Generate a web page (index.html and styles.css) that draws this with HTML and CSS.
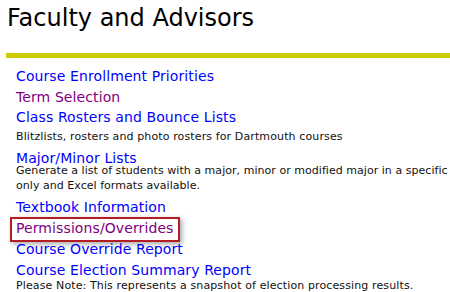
FILE: index.html
```html
<!DOCTYPE html>
<html lang="en">
<head>
    <meta charset="UTF-8">
    <title>Faculty and Advisors</title>
    <link rel="stylesheet" href="styles.css">
</head>
<body>

<div class="page">
    <h1 class="page-title">Faculty and Advisors</h1>
    <div class="rule"></div>

    <!-- Faculty tools -->
    <ul class="menu">
        <li><a href="#" class="link">Course Enrollment Priorities</a></li>
        <li><a href="#" class="link visited">Term Selection</a></li>
        <li class="has-desc">
            <a href="#" class="link">Class Rosters and Bounce Lists</a>
            <div class="desc">Blitzlists, rosters and photo rosters for Dartmouth courses</div>
        </li>
        <li class="has-desc">
            <a href="#" class="link">Major/Minor Lists</a>
            <div class="desc tight">Generate a list of students with a major, minor or modified major in a specific<br>only and Excel formats available.</div>
        </li>
        <li><a href="#" class="link">Textbook Information</a></li>
        <li class="highlight"><a href="#" class="link visited">Permissions/Overrides</a></li>
        <li><a href="#" class="link">Course Override Report</a></li>
        <li>
            <a href="#" class="link">Course Election Summary Report</a>
            <div class="desc note">Please Note: This represents a snapshot of election processing results.</div>
        </li>
    </ul>
</div>

</body>
</html>
```

FILE: styles.css
```css
body {
    margin: 0;
    font-family: "DejaVu Sans", Verdana, sans-serif;
    color: #000;
    background: #fff;
    overflow: hidden;
}
.page {
    width: 450px;
}
.page-title {
    margin: 4px 0 0 7px;
    font-size: 24px;
    line-height: 28px;
    font-weight: normal;
    white-space: nowrap;
}
.rule {
    margin: 21px 0 0 6px;
    height: 5px;
    background-color: #cccc00;
}
.menu {
    list-style: none;
    margin: 8px 0 0 0;
    padding: 0 0 0 16px;
}
.menu li {
    position: relative;
}
.menu li.has-desc {
    margin-bottom: 4px;
}
.link {
    display: block;
    font-size: 14px;
    line-height: 20.5px;
    letter-spacing: 0.1px;
    color: #0000ff;
    text-decoration: none;
    white-space: nowrap;
}
.link.visited {
    color: #800080;
}
.desc {
    margin-top: 1px;
    font-size: 11px;
    line-height: 15px;
    letter-spacing: 0.12px;
    color: #111;
    white-space: nowrap;
}
.desc.tight {
    margin-top: -5px;
    letter-spacing: 0.04px;
}
.desc.note {
    margin-top: -2px;
}
.highlight {
    margin-bottom: 1px;
}
/* red annotation box drawn over the link */
.highlight::after {
    content: "";
    position: absolute;
    left: -6px;
    top: -1px;
    width: 166px;
    height: 21px;
    border: 2px solid #b21e23;
    box-shadow: 2px 2px 5px rgba(0, 0, 0, 0.35);
    pointer-events: none;
}
```
